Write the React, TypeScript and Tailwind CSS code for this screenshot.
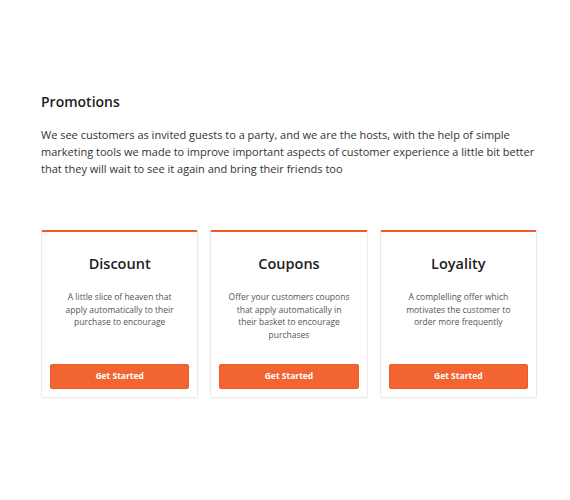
const cards = [
  {
    title: "Discount",
    text: "A little slice of heaven that apply automatically to their purchase to encourage",
  },
  {
    title: "Coupons",
    text: "Offer your customers coupons that apply automatically in their basket to encourage purchases",
  },
  {
    title: "Loyality",
    text: "A complelling offer which motivates the customer to order more frequently",
  },
]

export default function App() {
  return (
    <div className="min-h-[500px] bg-white font-['Open_Sans',sans-serif] text-[#222]">
      <div className="ml-[41px] w-[496px] pt-[93px]">
        <h2 className="text-[14px] leading-[18px] font-semibold text-[#1d1d1d]">Promotions</h2>
        <p className="mt-[15px] text-[11px] leading-[17px] text-[#333]">
          We see customers as invited guests to a party, and we are the hosts, with the help of simple
          marketing tools we made to improve important aspects of customer experience a little bit better
          that they will wait to see it again and bring their friends too
        </p>

        <div className="mt-[53px] grid grid-cols-3 gap-[12px]">
          {cards.map((card) => (
            <div
              key={card.title}
              className="h-[168px] flex flex-col border border-[#eaeaea] border-t-2 border-t-[#f4592a] rounded-[2px] bg-white shadow-[0_1px_2px_rgba(0,0,0,0.04)]"
            >
              <h3 className="mt-[22px] text-center text-[14.5px] leading-[20px] font-semibold text-[#1d1d1d]">
                {card.title}
              </h3>
              <p className="mt-[17px] px-[16px] text-center text-[8.5px] leading-[12.5px] text-[#555]">
                {card.text}
              </p>
              <button className="mt-auto mx-[8px] mb-[8px] h-[25px] rounded-[2px] border border-[#ef5b24] bg-[#f26532] text-[8.5px] font-bold text-white">
                Get Started
              </button>
            </div>
          ))}
        </div>
      </div>
    </div>
  )
}
